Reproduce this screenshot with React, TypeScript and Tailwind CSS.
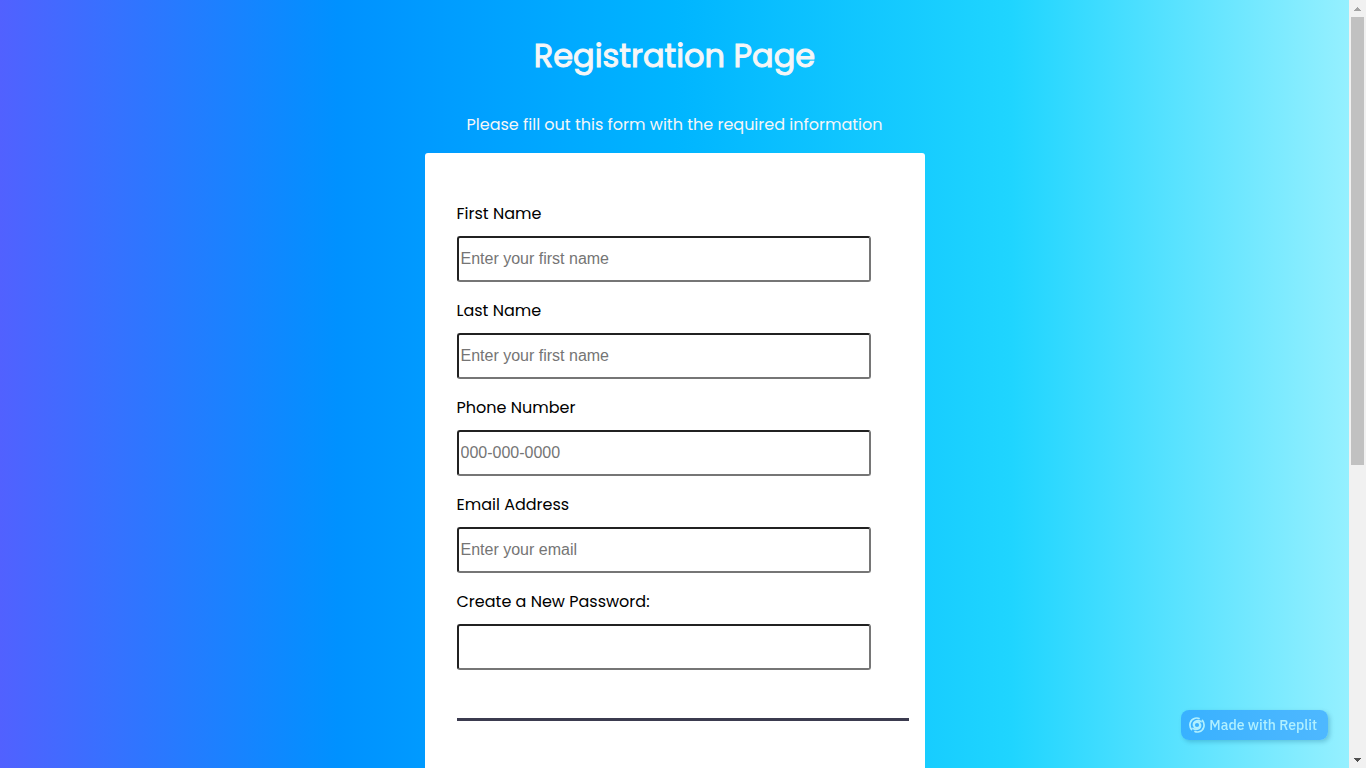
import React from "react";

type Field = { id: string; label: string; type: string; placeholder?: string };

const fields: Field[] = [
  { id: "first-name", label: "First Name", type: "text", placeholder: "Enter your first name" },
  { id: "last-name", label: "Last Name", type: "text", placeholder: "Enter your first name" },
  { id: "phone", label: "Phone Number", type: "tel", placeholder: "000-000-0000" },
  { id: "email", label: "Email Address", type: "email", placeholder: "Enter your email" },
  { id: "new-password", label: "Create a New Password:", type: "password" },
];

function FormField({ id, label, type, placeholder }: Field) {
  return (
    <div className="flex flex-col gap-2">
      <label htmlFor={id} className="text-base leading-7 text-black">
        {label}
      </label>
      <input
        id={id}
        type={type}
        placeholder={placeholder}
        className="h-[46px] w-full rounded-[3px] border-2 border-t-[#212121] border-r-[#767676] border-b-[#767676] border-l-[#212121] bg-white px-0.5 font-['Liberation_Sans',Arial,sans-serif] text-base text-black placeholder:text-[#757575]"
      />
    </div>
  );
}

function SwirlIcon() {
  return (
    <svg viewBox="0 0 32 32" className="size-4 shrink-0" fill="none" stroke="currentColor" aria-hidden="true">
      <circle cx="16" cy="16" r="6" strokeWidth="3.600" />
      <g strokeWidth="3.400" strokeLinecap="round">
        <path d="M9 17C8 9 16 5 24 9" />
        <path d="M23 15C24 23 16 27 8 23" />
        <path d="M5 25C-1 17 2 5 12 2.500C15 1.800 18 1.800 20 3" />
        <path d="M27 7C33 15 30 27 20 29.500C17 30.200 14 30.200 12 29" />
      </g>
    </svg>
  );
}

function ScrollTrack() {
  return (
    <div className="flex h-full w-[17px] shrink-0 flex-col items-center justify-between bg-[#f1f1f1]" aria-hidden="true">
      <div className="flex h-[17px] items-center justify-center">
        <svg viewBox="0 0 7 4" className="h-1 w-[7px]" fill="#a3a3a3" shapeRendering="crispEdges">
          <path d="M3 0h1v1h1v1h1v1h1v1H0V3h1V2h1V1h1z" />
        </svg>
      </div>
      <div className="w-full flex-1 px-0.5">
        <div className="h-[61%] bg-[#c1c1c1]" />
      </div>
      <div className="flex h-[17px] items-center justify-center">
        <svg viewBox="0 0 7 4" className="h-1 w-[7px]" fill="#505050" shapeRendering="crispEdges">
          <path d="M0 0h7v1H6v1H5v1H4v1H3V3H2V2H1V1H0z" />
        </svg>
      </div>
    </div>
  );
}

export default function App() {
  return (
    <div className="flex h-screen overflow-hidden font-[Poppins,Inter,sans-serif]">
      <main className="min-w-0 flex-1 overflow-hidden bg-[linear-gradient(to_right,#5161ff_0%,#0091ff_25%,#00b5ff_50%,#1fd5ff_75%,#95f0ff_100%)]">
        <header className="flex flex-col items-center gap-[37px] pt-8 text-center text-[#f5f6f7]">
          <h1 className="text-[32px] leading-12 font-normal [-webkit-text-stroke:1px_#f5f6f7]">Registration Page</h1>
          <p className="text-base leading-4">Please fill out this form with the required information</p>
        </header>
        <form className="mx-auto mt-5 min-h-screen w-full max-w-[500px] rounded-[3px] bg-white pt-[47px] pr-4 pl-8">
          <fieldset className="flex w-11/12 flex-col gap-[15px]">
            {fields.map((field) => (
              <FormField key={field.id} {...field} />
            ))}
          </fieldset>
          <hr className="mt-12 border-t-3 border-[#3b3b4f]" />
        </form>
      </main>
      <ScrollTrack />
      <a
        href="#replit"
        className="fixed right-[38px] bottom-7 flex h-[30px] items-center gap-1 rounded-lg bg-linear-to-r from-[#38b1ff] to-[#4eb8ff] pr-[11px] pl-2 font-['IBM_Plex_Sans',Roboto,sans-serif] text-sm font-medium text-[#b0f0ff] shadow-[2px_2px_4px_rgba(0,80,120,0.25)]"
      >
        <SwirlIcon />
        Made with Replit
      </a>
    </div>
  );
}
